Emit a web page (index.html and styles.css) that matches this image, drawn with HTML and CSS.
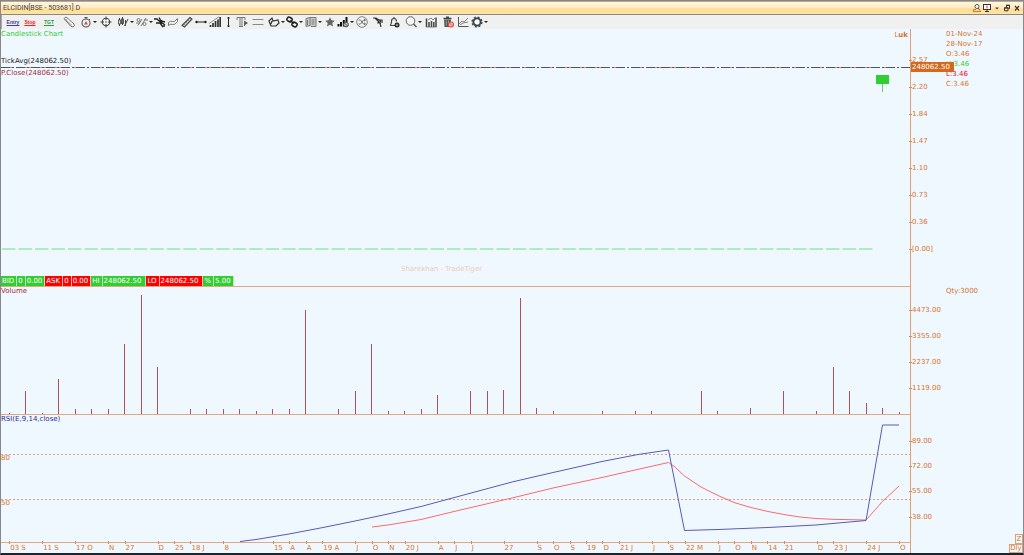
FILE: index.html
```html
<!DOCTYPE html>
<html lang="en">
<head>
<meta charset="utf-8">
<title>ELCIDIN[BSE - 503681] D</title>
<link rel="stylesheet" href="styles.css">
</head>
<body>
<div class="window">
  <header class="titlebar">
    <h1 class="title">ELCIDIN[BSE - 503681] D</h1>
    <div class="window-buttons">
      <button type="button" aria-label="Find"><svg viewBox="0 0 10 10"><circle cx="5" cy="3.5" r="2" fill="#fff" stroke="#555"/><path d="M6 5l2 2.5" stroke="#555"/><path d="M1.5 8.5V6.500H4M1 8.500h8" stroke="#e07020" fill="none"/></svg></button>
      <button type="button" aria-label="Dock"><svg viewBox="0 0 10 10"><rect x="1.500" y="1.500" width="7" height="5" fill="#fff" stroke="#333"/><path d="M5 2.500v3" stroke="#d33"/><path d="M3 8.500h4M5 6v3" stroke="#333"/></svg></button>
      <button type="button" aria-label="Options"><svg viewBox="0 0 10 10"><path d="M3 4.500h4L5 6.500z" fill="#444"/></svg></button>
      <button type="button" aria-label="Restore"><svg viewBox="0 0 10 10"><path d="M4.500 4V2.500h3v3H6.500" fill="none" stroke="#333"/><path d="M4 2.200h4" stroke="#333"/><path d="M2.500 4.800h3.500v3h-3.500z" fill="none" stroke="#333"/><path d="M2 5h4.500" stroke="#333"/></svg></button>
      <button type="button" aria-label="Close"><svg viewBox="0 0 10 10"><path d="M3 3l4 4.500M7 3L3 7.500" stroke="#333" stroke-width="1.200"/></svg></button>
    </div>
  </header>

  <nav class="toolbar" aria-label="Chart tools">
    <button type="button" class="w16 word entry">Entry</button>
    <button type="button" class="w18 word stop">Stop</button>
    <button type="button" class="w20 word target">TGT</button>
    <button type="button" class="w20" aria-label="Pencil"><svg viewBox="0 0 12 12"><path d="M1 2.500L3 1l8 7q1.200 2-1 3L7.500 10z" fill="#fff" stroke="#666" stroke-width=".9"/><path d="M2.500 3.500L9 9.500M4 2.500l-2 2" stroke="#777" stroke-width=".8"/></svg></button>
    <button type="button" class="w18 drop" aria-label="Timer"><svg viewBox="0 0 12 12"><circle cx="6" cy="7" r="4" fill="#eee" stroke="#555" stroke-width="1.100"/><path d="M4.500 1.500h3M6 1v2M9 3l1 1" stroke="#555"/><path d="M4 8.500L6 5l2 3.500z" fill="#c55548"/></svg></button>
    <button type="button" class="w18" aria-label="Crosshair"><svg viewBox="0 0 12 12"><circle cx="6" cy="6" r="3.700" fill="none" stroke="#444" stroke-width="1.100"/><path d="M6 .5v3.500M6 8v3.500M.5 6H4M8 6h3.500" stroke="#444" stroke-width="1.100"/><circle cx="6" cy="6" r=".8" fill="#555"/></svg></button>
    <button type="button" class="w20 drop" aria-label="Chart type"><svg viewBox="0 0 12 12"><path d="M2.500 2v8M5.500 1v8M7.500 10L11 3M8.500 4v6" stroke="#444" fill="none"/><rect x="1.500" y="4" width="2" height="4" fill="#ddd" stroke="#444" stroke-width=".8"/><rect x="4.500" y="3" width="2" height="4.500" fill="#666" stroke="#444" stroke-width=".8"/></svg></button>
    <button type="button" class="w18 drop" aria-label="Percent scale"><svg viewBox="0 0 12 12"><circle cx="2.500" cy="4" r="1.500" fill="none" stroke="#777"/><circle cx="8.500" cy="8" r="1.500" fill="none" stroke="#777"/><path d="M2 9.500L6 3M5 10l5-8M0 7h4M8 4h4" stroke="#777" fill="none"/></svg></button>
    <button type="button" class="w14" aria-label="Pattern"><svg viewBox="0 0 12 12"><path d="M0 3h3l2 2 3 1M5 1.500L7 5l4 1M2 7l4 0 3 4M7 6l4 3" stroke="#222" stroke-width="1.300" fill="none"/><path d="M5 4h3v4H6z" fill="#222"/><circle cx="10" cy="10" r="1" fill="#222"/></svg></button>
    <button type="button" class="w12" aria-label="Wave"><svg viewBox="0 0 12 12"><path d="M1.500 6.500q2-2 4-1t5-3M1.500 9.500q2-2 4-1t5-3M1.500 6.500v3M10.500 2.500v3" stroke="#777" fill="none"/></svg></button>
    <button type="button" class="w16" aria-label="Ruler"><svg viewBox="0 0 12 12"><path d="M1 9.500L9 1.500l2 1.500L3.500 11z" fill="#ddd" stroke="#444" stroke-width="1.100"/><path d="M3 8l1 1M5 6l1 1M7 4l1 1" stroke="#777" stroke-width=".7"/></svg></button>
    <button type="button" class="w12" aria-label="Horizontal line"><svg viewBox="0 0 12 12"><path d="M1 6h10" stroke="#222"/><circle cx="1.500" cy="6" r="1.200" fill="#222"/><circle cx="10.500" cy="6" r="1.200" fill="#222"/></svg></button>
    <button type="button" class="w16" aria-label="Volume bars"><svg viewBox="0 0 12 12"><path d="M1.500 11V9M4 11V7M6.500 11V5M9 11V3.500M11.200 11V1" stroke="#333" stroke-width="1.700"/><path d="M0 7.500L10 .8" stroke="#777" stroke-width=".8"/></svg></button>
    <button type="button" class="w12" aria-label="Vertical line"><svg viewBox="0 0 12 12"><path d="M5.500 1.500v9" stroke="#222"/><circle cx="5.500" cy="2" r="1.100" fill="#222"/><circle cx="5.500" cy="10" r="1.100" fill="#222"/></svg></button>
    <button type="button" class="w14" aria-label="Text"><svg viewBox="0 0 12 12"><path d="M1 4V1.500h8V4M4 2v8.500M6 2v8.500M3 10.500h4" stroke="#777" fill="none"/><path d="M8 4.500l4 2.500-3 2z" fill="#555"/><path d="M8.500 5v5" stroke="#666"/></svg></button>
    <button type="button" class="w18" aria-label="Parallel lines"><svg viewBox="0 0 12 12"><path d="M.5 3.500h11M.5 8.500h11" stroke="#888" stroke-width="1.200"/></svg></button>
    <button type="button" class="w18 drop" aria-label="Freehand"><svg viewBox="0 0 12 12"><path d="M1 5l3-3 1 3 5-1 1 3-3 3H3zM4 5L3 8M1 5l2 5" fill="none" stroke="#333" stroke-width="1.200"/></svg></button>
    <button type="button" class="w18 drop" aria-label="Link"><svg viewBox="0 0 12 12"><g fill="none" stroke="#222" stroke-width="1.500"><rect x="1" y="1.500" width="5" height="4" rx="1.500" transform="rotate(30 3.500 3.500)"/><rect x="6" y="6.500" width="5" height="4" rx="1.500" transform="rotate(30 8.500 8.500)"/><path d="M4 4.500l4 3"/></g></svg></button>
    <button type="button" class="w20 drop" aria-label="News"><svg viewBox="0 0 12 12"><path d="M1 2.500l4-1v8l-4 1zM5 1.500h6v9H6l-1-1" fill="#ccc" stroke="#777"/><path d="M6.500 4h3M6.500 6h3M6.500 8h3M2.500 4v5" stroke="#777"/></svg></button>
    <button type="button" class="w14" aria-label="Favourite"><svg viewBox="0 0 12 12"><path d="M6 1.200l1.400 3.100 3.400.4-2.500 2.300.7 3.400L6 8.700l-3 1.700.7-3.400L1.200 4.700l3.400-.4z" fill="#666"/></svg></button>
    <button type="button" class="w16 drop" aria-label="Intraday"><svg viewBox="0 0 12 12"><path d="M1.500 10.500V8M4 10.500V6M6.800 10.500V4M9.500 6V1" stroke="#111" stroke-width="2"/><circle cx="9" cy="8.500" r="2.400" fill="#ccc" stroke="#444"/><path d="M7.500 7l3 3" stroke="#444"/></svg></button>
    <button type="button" class="w18" aria-label="Compare"><svg viewBox="0 0 12 12"><circle cx="6" cy="6" r="5.300" fill="#f4f4f4" stroke="#777" stroke-width=".9"/><path d="M2.500 4h2L7.500 8h2M2.500 8h2L7.500 4h2M8 2.800L9.500 4 8 5.200M8 6.800L9.500 8 8 9.200" fill="none" stroke="#666" stroke-width=".9"/></svg></button>
    <button type="button" class="w14" aria-label="Signals"><svg viewBox="0 0 12 12"><path d="M1 2h3l3 2h3v3M3 2l5 5 1 4M6 4v3h3" fill="none" stroke="#333" stroke-width="1.200"/><path d="M6 4h3v3z" fill="#444"/></svg></button>
    <button type="button" class="w18" aria-label="Alert"><svg viewBox="0 0 12 12"><path d="M6 1v1M2 9.500q1.500-1 1.500-4t2.500-3q2.500 0 2.500 3M2 9.500h5" fill="none" stroke="#444" stroke-width="1.200"/><circle cx="9" cy="9" r="2.500" fill="#222"/><path d="M9 7.800v2.400M7.800 9h2.400" stroke="#ddd" stroke-width=".7"/></svg></button>
    <button type="button" class="w20 drop" aria-label="Zoom"><svg viewBox="0 0 12 12"><circle cx="5.500" cy="5" r="4.300" fill="#f6f6f6" stroke="#666"/><path d="M8.500 8l3 3" stroke="#555" stroke-width="1.400"/></svg></button>
    <button type="button" class="w16" aria-label="Statistics"><svg viewBox="0 0 12 12"><path d="M1.500 11V2.500M4 11V6M6.500 11V5M8.800 11V6M11 11V1.500" stroke="#444" stroke-width="1.500"/><path d="M1 11h10.500M3 4l3-2 2 2 2-2" stroke="#666" fill="none" stroke-width=".8"/></svg></button>
    <button type="button" class="w18" aria-label="Delete"><svg viewBox="0 0 12 12"><path d="M1.500 2.500h8M4 1.200h3" stroke="#444" stroke-width="1.400"/><path d="M2 3.500h7l-.5 7.500h-6z" fill="#555"/><path d="M4.300 4.500v5M6.500 4.500v5" stroke="#bbb" stroke-width=".7"/><circle cx="9" cy="8.500" r="2.500" fill="#f4d4d0" stroke="#e0483c" stroke-width="1.100"/><path d="M7.500 7l3 3" stroke="#e0483c"/></svg></button>
    <button type="button" class="w12" aria-label="Line chart"><svg viewBox="0 0 12 12"><path d="M1.500 1v9.500h10" stroke="#555" fill="none"/><path d="M2 8l3-3 2 1 4-4M3 9l3-2 5-1" stroke="#777" fill="none" stroke-width=".9"/></svg></button>
    <button type="button" class="w20 drop" aria-label="Settings"><svg viewBox="0 0 12 12"><circle cx="6" cy="6" r="4.900" fill="none" stroke="#37474f" stroke-width="1.400" stroke-dasharray="2 1.850"/><circle cx="6" cy="6" r="3.600" fill="#fff" stroke="#37474f" stroke-width="1.900"/></svg></button>
  </nav>

  <main class="chart">
    <section class="plot price">
      <svg class="canvas" id="price-canvas" viewBox="0 0 909 257" preserveAspectRatio="none" aria-hidden="true"></svg>
      <div class="legend"><h2 class="green">Candlestick Chart</h2><span class="link">L<b>uk</b></span></div>
      <div class="levels"><p class="ink">TickAvg(248062.50)</p><p class="maroon">P.Close(248062.50)</p></div>
      <p class="watermark">Sharekhan - TradeTiger</p>
      <div class="quote">
        <span>BID</span><span>0</span><span>0.00</span>
        <span class="down">ASK</span><span class="down">0</span><span class="down">0.00</span>
        <span>HI</span><span class="value">248062.50</span>
        <span class="down">LO</span><span class="down value">248062.50</span>
        <span>%</span><span>5.00</span>
      </div>
    </section>
    <aside class="side" id="price-scale">
      <div class="readout"><span>01-Nov-24</span><span>28-Nov-17</span><span>O:3.46</span><span class="green">H:3.46</span><span class="red">L:3.46</span><span>C:3.46</span></div>
      <span class="tag">248062.50</span>
    </aside>

    <section class="plot volume">
      <svg class="canvas" id="volume-canvas" viewBox="0 0 909 127" preserveAspectRatio="none" aria-hidden="true"></svg>
      <h2 class="maroon">Volume</h2>
    </section>
    <aside class="side" id="volume-scale"><div class="quantity">Qty:3000</div></aside>

    <section class="plot rsi">
      <svg class="canvas" viewBox="0 0 909 127" preserveAspectRatio="none" aria-hidden="true">
        <path class="guide" d="M0 39.500H909M0 84.500H909"/>
        <polyline class="average" points="371,112 387,110 420,104.500 455,96 511,83 552,73 601,62.500 634,55 667.500,47.500 674,52 683.500,61 700,72 717,80.500 733,87.500 750,92.500 767,96.500 783,99.500 799,102 815,103.500 832,104.300 849,104.700 865,105 881.500,86.500 898,71"/>
        <polyline class="index" points="239,126.500 255,124.500 288,119 322,112.500 354,106 387,99 420,91.500 446,84.500 511,67 552,57.500 601,46.500 637,39.500 667.500,35 683.500,115.500 700,115 717,114.500 767,112.500 815,110 865,105.500 881.500,10 898,10"/>
      </svg>
      <h2 class="navy">RSI(E,9,14,close)</h2>
      <span class="guide-label" style="top:34%">80</span>
      <span class="guide-label" style="top:69%">50</span>
    </section>
    <aside class="side" id="rsi-scale"><button type="button" class="zoom-button">Z</button></aside>

    <div class="dates" id="dates"></div>
    <aside class="side corner"><button type="button" class="period">Dly</button></aside>
  </main>
</div>
<script src="chart.js"></script>
</body>
</html>
```
FILE: styles.css
```css
* { box-sizing: border-box; }
body { margin: 0; background: #1c2430; font: 7px/10px "DejaVu Sans", "Noto Sans", sans-serif; color: #d8742e; }
h1, h2, p { margin: 0; font: inherit; }
button { margin: 0; padding: 0; border: 0; background: none; color: inherit; font: inherit; }

.window { display: flex; flex-direction: column; min-height: 100vh; border: 1px solid #88888c; border-width: 1px 1px 2px; border-bottom-color: #1c2430; }
.titlebar { display: flex; align-items: center; justify-content: space-between; height: 14px; padding: 0 1px 0 2px; border-top: 1px solid #b8a890; border-bottom: 1px solid #888; background: linear-gradient(#fff8e4, #ffeab8 50%, #ffe09a 55%, #ffe2a0); }
.title { font-family: Roboto, "Liberation Sans", sans-serif; font-size: 7px; color: #444; }
.window-buttons { display: flex; }
.window-buttons button { width: 10px; height: 10px; }
.window-buttons button svg { display: block; width: 10px; height: 10px; fill: none; }

.toolbar { display: flex; align-items: center; height: 14px; padding-left: 3px; background: #f0f0f0; border-left: 1px solid #aaa; }
.toolbar button { display: flex; align-items: center; justify-content: center; gap: 1px; height: 14px; }
.toolbar svg { flex: none; width: 12px; height: 12px; }
.drop::after { content: ""; border: 2px solid transparent; border-top-color: #222; border-bottom: 0; }
.toolbar .word { font: bold 5px/6px "Liberation Sans", sans-serif; }
.word { text-decoration: underline; }
.entry { color: #4040a0; }
.stop { color: #f02020; }
.target { color: #20a040; }
.w12 { width: 12px; }
.w14 { width: 14px; }
.w16 { width: 16px; }
.w18 { width: 18px; }
.w20 { width: 20px; }

.chart { flex: 1; display: grid; grid-template-columns: minmax(0, 1fr) 113px; grid-template-rows: 258fr 128fr 128fr 10px; background: #f0f8ff; }
.plot { position: relative; min-height: 0; border-bottom: 1px solid #e2a883; }
.plot h2 { position: relative; line-height: 8px; }
.canvas { position: absolute; inset: 0; width: 100%; height: 100%; }
.canvas * { vector-effect: non-scaling-stroke; }
.side { position: relative; border-left: 1px solid #e2a071; }

.price { display: flex; flex-direction: column; }
.legend { position: relative; display: flex; justify-content: space-between; padding: 1px 2px 0 0; font-size: 7px; }
.levels { position: relative; padding: 15px 0 0; line-height: 12px; }
.watermark { position: relative; margin: auto 0 2px 44%; color: #ecccc0; }
.quote { position: relative; display: flex; line-height: 10px; color: #fff; }
.quote span { padding: 0 2px 0 1px; border-right: 1px solid #b8e8b8; background: #32cd32; }
.quote .down { border-color: #ffb0b0; background: #f00; }
.quote .value { padding-right: 4px; }

.green { color: #32cd32; }
.red { color: #f00028; }
.maroon { color: #a52a3a; }
.navy { color: #2a2a9c; }
.ink { color: #222; }

.scale-label { position: absolute; left: -2px; display: flex; align-items: center; height: 10px; margin-top: -5px; }
.scale-label::before { content: ""; width: 3px; height: 1px; background: #e08848; }
.readout { display: grid; grid-template-rows: repeat(6, 1fr); height: 58px; margin: 0 0 0 35px; }
.tag { position: absolute; left: 0; top: 15%; height: 10px; margin-top: -6px; padding: 0 4px 0 1px; background: #d2691e; color: #fff; }
.quantity { margin: -1px 0 0 35px; }

.grid-bar { stroke: #b0505c; }
.dash { stroke: #9ce6ac; stroke-width: 1.5; }
.close-line { stroke: #e08080; stroke-dasharray: 12 6; }
.tick-line { stroke: #50545c; stroke-dasharray: 9 2 2 2; }
.candle { fill: #32cd32; }
.wick { stroke: #5fd65f; }
.guide { stroke: #e0a27c; stroke-dasharray: 2 2; }
.average { fill: none; stroke: #fb6a6a; }
.index { fill: none; stroke: #5a5ab4; }
.guide-label { position: absolute; left: 0; margin-top: -5px; }

.dates { position: relative; min-width: 0; }
.date { position: absolute; top: 0; padding-left: 1px; white-space: nowrap; }
.date::before { content: ""; position: absolute; left: 0; top: -2px; width: 1px; height: 3px; background: #e08848; }
.zoom-button { position: absolute; right: 0; bottom: -1px; width: 8px; height: 10px; border: 1px solid #e2a071; line-height: 8px; }
.corner { display: flex; justify-content: flex-end; }
.period { width: 14px; height: 9px; margin: 1px 0 0; border: 1px solid #e2a071; line-height: 7px; }
```
FILE: chart.js
```js
const SVG_NS = "http://www.w3.org/2000/svg";
const WIDTH = 909;
const xOf = i => 8.2 + 16.48 * i;

function draw(canvas, tag, attributes) {
  const node = document.createElementNS(SVG_NS, tag);
  for (const name in attributes) node.setAttribute(name, attributes[name]);
  document.getElementById(canvas).append(node);
}

function addScale(id, height, labels) {
  for (const [text, y] of labels) {
    const label = document.createElement("span");
    label.className = "scale-label";
    label.style.top = (y / height * 100) + "%";
    label.textContent = text;
    document.getElementById(id).prepend(label);
  }
}

for (let i = 0; i < 53; i++) {
  const x = 1 + 16.48 * i;
  draw("price-canvas", "path", { class: "dash", d: `M${x} 220H${x + 13.5}` });
}
draw("price-canvas", "path", { class: "close-line", d: "M0 38.5H909" });
draw("price-canvas", "path", { class: "tick-line", d: "M0 38.5H909" });
draw("price-canvas", "path", { class: "wick", d: "M881.500 54V63" });
draw("price-canvas", "rect", { class: "candle", x: 875, y: 46, width: 13, height: 9 });

const volumes = [1, 23, 1, 35, 5, 5, 5, 70, 119, 47, 0, 5, 5, 5, 5, 3, 5, 5, 104, 0,
  5, 23, 70, 3, 3, 5, 19, 0, 23, 23, 24, 116, 6, 3, 0, 0, 3, 0, 3, 3,
  0, 0, 23, 3, 0, 6, 0, 23, 0, 3, 47, 23, 11, 6, 2];
volumes.forEach((v, i) => {
  const x = Math.floor(xOf(i)) + 0.5;
  if (v) draw("volume-canvas", "path", { class: "grid-bar", d: `M${x} 127V${127 - v}` });
});

addScale("price-scale", 258, [["2.57", 31], ["2.20", 58], ["1.84", 85], ["1.47", 112],
  ["1.10", 139], ["0.73", 166], ["0.36", 193], ["[0.00]", 220]]);
addScale("volume-scale", 128, [["4473.00", 23], ["3355.00", 49], ["2237.00", 75], ["1119.00", 101]]);
addScale("rsi-scale", 128, [["89.00", 26], ["72.00", 51], ["55.00", 76], ["38.00", 102]]);

const dates = [[0, "03 S"], [2, "11 S"], [4, "17 O"], [6, "N"], [7, "27"], [9, "D"], [10, "25"],
  [11, "18 J"], [13, "8"], [16, "15"], [17, "A"], [18, "A"], [19, "19 A"], [21, "J"], [22, "O"],
  [23, "N"], [24, "20 J"], [26, "A"], [27, "J"], [28, "J"], [30, "27"], [32, "S"], [33, "O"],
  [34, "S"], [35, "19"], [36, "D"], [37, "21 J"], [39, "J"], [40, "S"], [41, "22 M"], [43, "J"],
  [44, "O"], [45, "N"], [46, "14"], [47, "21"], [49, "D"], [50, "23 J"], [52, "24 J"], [54, "O"]];
for (const [i, text] of dates) {
  const label = document.createElement("span");
  label.className = "date";
  label.style.left = (xOf(i) / WIDTH * 100) + "%";
  label.textContent = text;
  document.getElementById("dates").append(label);
}
```
